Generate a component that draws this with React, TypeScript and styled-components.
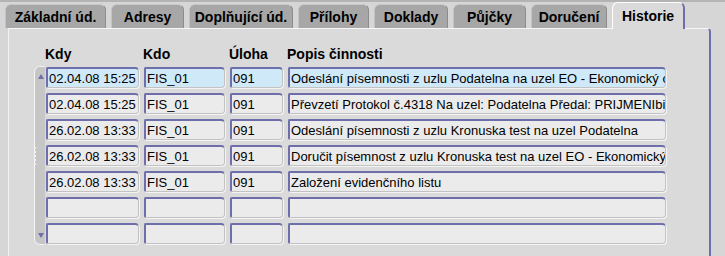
import React from "react";
import styled, { createGlobalStyle } from "styled-components";

const GlobalStyle = createGlobalStyle`
  html, body {
    margin: 0;
    padding: 0;
    background: #d6d6d6;
  }
  body {
    font-family: "Liberation Sans", Arial, sans-serif;
  }
`;

const purple = "#6e6eaa";

const StyledWindow = styled.div`
  width: 725px;
  height: 256px;
  overflow: hidden;
  background: #d6d6d6;
  border-top: 2px solid #b4b4b4;
  box-sizing: border-box;
`;

const TabStrip = styled.div`
  display: flex;
  align-items: flex-end;
  gap: 5px;
  height: 26px;
  padding-left: 5px;
  position: relative;
  z-index: 1;
`;

const Tab = styled.div<{ $active?: boolean; $width: number }>`
  width: ${(p) => p.$width}px;
  box-sizing: border-box;
  height: ${(p) => (p.$active ? 27 : 24)}px;
  margin-bottom: ${(p) => (p.$active ? -1 : 0)}px;
  display: flex;
  align-items: center;
  justify-content: center;
  padding-top: ${(p) => (p.$active ? 0 : 1)}px;
  font-size: 14px;
  font-weight: bold;
  color: #000;
  background: ${(p) => (p.$active ? "#dadada" : "#a7a7a7")};
  border-top: 1px solid ${(p) => (p.$active ? "#ffffff" : "#c8c8c8")};
  border-left: 1px solid ${(p) => (p.$active ? "#ffffff" : "#c4c4c4")};
  border-right: ${(p) => (p.$active ? `2px solid ${purple}` : "1px solid #8c8c8c")};
  border-radius: 6px 6px 0 0;
`;

const Panel = styled.div`
  margin-left: 8px;
  width: 703px;
  height: 232px;
  box-sizing: border-box;
  background: #dadada;
  border-top: 1px solid #f6f6f6;
  border-left: 1px solid #f2f2f2;
  border-right: 2px solid ${purple};
  border-top-right-radius: 4px;
  padding: 17px 0 0 25px;
`;

const columns = "93px 81px 53px 378px";

const HeaderRow = styled.div`
  display: grid;
  grid-template-columns: ${columns};
  column-gap: 5px;
  margin-left: 11px;
  height: 16px;
  line-height: 16px;
  font-size: 14px;
  font-weight: bold;
  color: #000;
`;

const Body = styled.div`
  display: flex;
  margin-top: 4px;
  gap: 1px;
`;

const Scrollbar = styled.div`
  width: 11px;
  height: 179px;
  box-sizing: border-box;
  background: #c6c6c6;
  border-left: 1px solid #f4f4f4;
  border-top: 1px solid #f0f0f0;
  border-bottom: 1px solid #f0f0f0;
  border-radius: 6px 0 0 6px;
  display: flex;
  flex-direction: column;
  align-items: flex-end;
  justify-content: space-between;
  padding: 7px 1px 6px 0;
`;

const Arrow = styled.div<{ $down?: boolean }>`
  width: 0;
  height: 0;
  border-left: 3px solid transparent;
  border-right: 3px solid transparent;
  ${(p) =>
    p.$down
      ? `border-top: 5px solid ${purple};`
      : `border-bottom: 5px solid ${purple};`}
`;

const Grip = styled.div`
  width: 3px;
  height: 18px;
  margin-right: 5px;
  border-left: 2px dotted #f2f2f2;
`;

const Rows = styled.div`
  display: flex;
  flex-direction: column;
  gap: 5px;
  padding-top: 1px;
`;

const Row = styled.div`
  display: grid;
  grid-template-columns: ${columns};
  column-gap: 5px;
`;

const Field = styled.div<{ $selected?: boolean }>`
  height: 21px;
  box-sizing: border-box;
  padding: 2px 0 0 1px;
  line-height: 16px;
  font-size: 13px;
  color: #000;
  white-space: nowrap;
  overflow: hidden;
  background: ${(p) => (p.$selected ? "#cfe9f8" : "#ebebeb")};
  border-top: 2px solid ${purple};
  border-left: 2px solid ${purple};
  border-right: 1px solid #c2c2c2;
  border-bottom: 1px solid #c2c2c2;
  border-radius: 2px 4px 4px 2px;
  box-shadow: 1px 1px 0 #f4f4f4;
`;

const tabs = [
  { label: "Základní úd.", width: 101 },
  { label: "Adresy", width: 73 },
  { label: "Doplňující úd.", width: 104 },
  { label: "Přílohy", width: 71 },
  { label: "Doklady", width: 74 },
  { label: "Půjčky", width: 73 },
  { label: "Doručení", width: 76 },
  { label: "Historie", width: 73, active: true },
];

const rows = [
  ["02.04.08 15:25", "FIS_01", "091", "Odeslání písemnosti z uzlu Podatelna na uzel EO - Ekonomický odbor"],
  ["02.04.08 15:25", "FIS_01", "091", "Převzetí Protokol č.4318 Na uzel: Podatelna Předal: PRIJMENIbia"],
  ["26.02.08 13:33", "FIS_01", "091", "Odeslání písemnosti z uzlu Kronuska test na uzel Podatelna"],
  ["26.02.08 13:33", "FIS_01", "091", "Doručit písemnost z uzlu Kronuska test na uzel EO - Ekonomický odbor"],
  ["26.02.08 13:33", "FIS_01", "091", "Založení evidenčního listu"],
  ["", "", "", ""],
  ["", "", "", ""],
];

const App: React.FunctionComponent = () => {
  return (
    <>
      <GlobalStyle />
      <StyledWindow>
        <TabStrip>
          {tabs.map((t) => (
            <Tab key={t.label} $width={t.width} $active={t.active}>
              {t.label}
            </Tab>
          ))}
        </TabStrip>
        <Panel>
          <HeaderRow>
            <span>Kdy</span>
            <span>Kdo</span>
            <span>Úloha</span>
            <span>Popis činnosti</span>
          </HeaderRow>
          <Body>
            <Scrollbar>
              <Arrow />
              <Grip />
              <Arrow $down />
            </Scrollbar>
            <Rows>
              {rows.map((r, i) => (
                <Row key={i}>
                  {r.map((cell, j) => (
                    <Field key={j} $selected={i === 0}>
                      {cell}
                    </Field>
                  ))}
                </Row>
              ))}
            </Rows>
          </Body>
        </Panel>
      </StyledWindow>
    </>
  );
};

export default App;
